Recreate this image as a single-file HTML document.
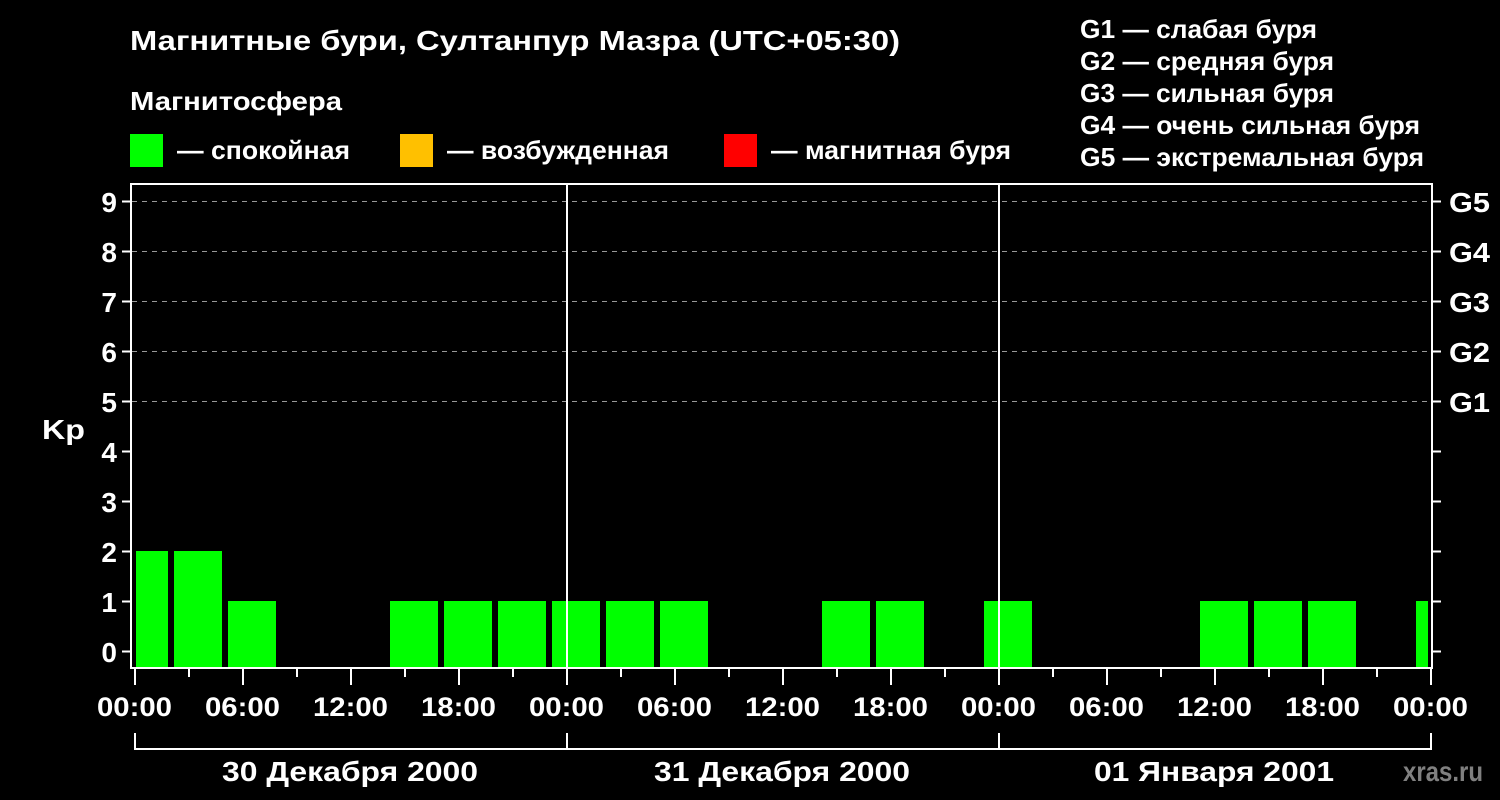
<!DOCTYPE html><html><head><style>body{margin:0;background:#000;}svg{display:block}text{font-family:"Liberation Sans",sans-serif;font-weight:bold;fill:#fff}</style></head><body>
<svg width="1500" height="800" xmlns="http://www.w3.org/2000/svg">
<rect width="1500" height="800" fill="#000"/>
<text x="130" y="50" font-size="28" textLength="770" lengthAdjust="spacingAndGlyphs">Магнитные бури, Султанпур Мазра (UTC+05:30)</text>
<text x="130" y="110" font-size="26" textLength="212" lengthAdjust="spacingAndGlyphs">Магнитосфера</text>
<rect x="130" y="134" width="33" height="33" fill="#00ff00"/><text x="177" y="159" font-size="26" textLength="173" lengthAdjust="spacingAndGlyphs">— спокойная</text>
<rect x="400" y="134" width="33" height="33" fill="#ffc000"/><text x="447" y="159" font-size="26" textLength="222" lengthAdjust="spacingAndGlyphs">— возбужденная</text>
<rect x="724" y="134" width="33" height="33" fill="#ff0000"/><text x="771" y="159" font-size="26" textLength="240" lengthAdjust="spacingAndGlyphs">— магнитная буря</text>
<g font-size="26"><text x="1080" y="38" textLength="237" lengthAdjust="spacingAndGlyphs">G1 — слабая буря</text><text x="1080" y="70" textLength="254" lengthAdjust="spacingAndGlyphs">G2 — средняя буря</text><text x="1080" y="102" textLength="254" lengthAdjust="spacingAndGlyphs">G3 — сильная буря</text><text x="1080" y="134" textLength="340" lengthAdjust="spacingAndGlyphs">G4 — очень сильная буря</text><text x="1080" y="166" textLength="344" lengthAdjust="spacingAndGlyphs">G5 — экстремальная буря</text></g>
<g stroke="#999" stroke-width="1" stroke-dasharray="5,5"><line x1="132" y1="201.5" x2="1431" y2="201.5"/><line x1="132" y1="251.5" x2="1431" y2="251.5"/><line x1="132" y1="301.5" x2="1431" y2="301.5"/><line x1="132" y1="351.5" x2="1431" y2="351.5"/><line x1="132" y1="401.5" x2="1431" y2="401.5"/></g>
<g fill="#00ff00">
<rect x="136" y="551" width="32" height="117"/><rect x="174" y="551" width="48" height="117"/><rect x="228" y="601" width="48" height="67"/>
<rect x="390" y="601" width="48" height="67"/><rect x="444" y="601" width="48" height="67"/><rect x="498" y="601" width="48" height="67"/><rect x="552" y="601" width="48" height="67"/><rect x="606" y="601" width="48" height="67"/><rect x="660" y="601" width="48" height="67"/>
<rect x="822" y="601" width="48" height="67"/><rect x="876" y="601" width="48" height="67"/><rect x="984" y="601" width="48" height="67"/>
<rect x="1200" y="601" width="48" height="67"/><rect x="1254" y="601" width="48" height="67"/><rect x="1308" y="601" width="48" height="67"/><rect x="1416" y="601" width="12" height="67"/>
</g>
<g stroke="#fff" stroke-width="2" fill="none">
<path d="M131 668V184H1432V668Z"/>
<line x1="567" y1="183" x2="567" y2="668"/><line x1="999" y1="183" x2="999" y2="668"/>
<path d="M122 201.5h9M122 251.5h9M122 301.5h9M122 351.5h9M122 401.5h9M122 451.5h9M122 501.5h9M122 551.5h9M122 601.5h9M122 651.5h9"/>
<path d="M1432 201.5h9M1432 251.5h9M1432 301.5h9M1432 351.5h9M1432 401.5h9M1432 451.5h9M1432 501.5h9M1432 551.5h9M1432 601.5h9M1432 651.5h9"/>
<path d="M135 668v17M243 668v17M351 668v17M459 668v17M567 668v17M675 668v17M783 668v17M891 668v17M999 668v17M1107 668v17M1215 668v17M1323 668v17M1431 668v17"/>
<path d="M189 668v9M297 668v9M405 668v9M513 668v9M621 668v9M729 668v9M837 668v9M945 668v9M1053 668v9M1161 668v9M1269 668v9M1377 668v9"/>
<path d="M135 733v16H1431V733M567 733v16M999 733v16"/>
</g>
<g font-size="28" text-anchor="end"><text x="117" y="212">9</text><text x="117" y="262">8</text><text x="117" y="312">7</text><text x="117" y="362">6</text><text x="117" y="412">5</text><text x="117" y="462">4</text><text x="117" y="512">3</text><text x="117" y="562">2</text><text x="117" y="612">1</text><text x="117" y="662">0</text></g>
<text x="42" y="439" font-size="28" textLength="43" lengthAdjust="spacingAndGlyphs">Kp</text>
<g font-size="28"><text x="1449" y="212" textLength="41" lengthAdjust="spacingAndGlyphs">G5</text><text x="1449" y="262" textLength="41" lengthAdjust="spacingAndGlyphs">G4</text><text x="1449" y="312" textLength="41" lengthAdjust="spacingAndGlyphs">G3</text><text x="1449" y="362" textLength="41" lengthAdjust="spacingAndGlyphs">G2</text><text x="1449" y="412" textLength="41" lengthAdjust="spacingAndGlyphs">G1</text></g>
<g font-size="27">
<text x="97" y="716" textLength="75" lengthAdjust="spacingAndGlyphs">00:00</text><text x="205" y="716" textLength="75" lengthAdjust="spacingAndGlyphs">06:00</text><text x="313" y="716" textLength="75" lengthAdjust="spacingAndGlyphs">12:00</text><text x="421" y="716" textLength="75" lengthAdjust="spacingAndGlyphs">18:00</text><text x="529" y="716" textLength="75" lengthAdjust="spacingAndGlyphs">00:00</text><text x="637" y="716" textLength="75" lengthAdjust="spacingAndGlyphs">06:00</text><text x="745" y="716" textLength="75" lengthAdjust="spacingAndGlyphs">12:00</text><text x="853" y="716" textLength="75" lengthAdjust="spacingAndGlyphs">18:00</text><text x="961" y="716" textLength="75" lengthAdjust="spacingAndGlyphs">00:00</text><text x="1069" y="716" textLength="75" lengthAdjust="spacingAndGlyphs">06:00</text><text x="1177" y="716" textLength="75" lengthAdjust="spacingAndGlyphs">12:00</text><text x="1285" y="716" textLength="75" lengthAdjust="spacingAndGlyphs">18:00</text><text x="1393" y="716" textLength="75" lengthAdjust="spacingAndGlyphs">00:00</text>
<text x="222" y="781" font-size="28" textLength="256" lengthAdjust="spacingAndGlyphs">30 Декабря 2000</text><text x="654" y="781" font-size="28" textLength="256" lengthAdjust="spacingAndGlyphs">31 Декабря 2000</text><text x="1094" y="781" font-size="28" textLength="240" lengthAdjust="spacingAndGlyphs">01 Января 2001</text></g>
<text x="1403" y="781" font-size="28" style="fill:#808080" textLength="80" lengthAdjust="spacingAndGlyphs">xras.ru</text>
</svg></body></html>
